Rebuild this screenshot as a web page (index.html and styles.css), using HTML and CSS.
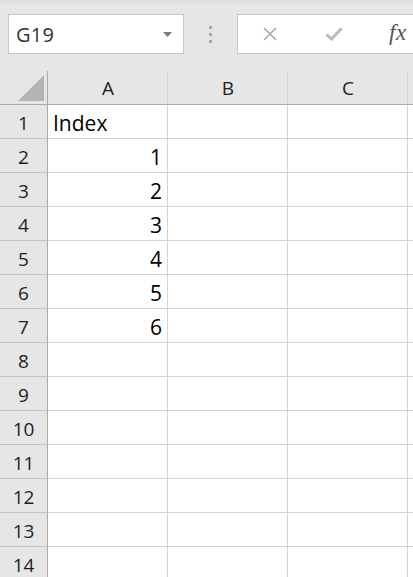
FILE: index.html
```html
<!DOCTYPE html>
<html>
<head>
<meta charset="utf-8">
<link rel="stylesheet" href="styles.css">
</head>
<body>
<div class="toolbar">
  <div class="namebox">
    <span class="name">G19</span>
    <svg class="caret" width="9" height="5" viewBox="0 0 9 5"><path d="M0 0H9L4.5 5Z" fill="#7a7a7a"/></svg>
  </div>
  <div class="dots"><span></span><span></span><span></span></div>
  <div class="formula">
    <svg class="ico-x" width="16" height="16" viewBox="0 0 16 16"><path d="M2 2L14 14M14 2L2 14" stroke="#a9a9a9" stroke-width="1.6" fill="none"/></svg>
    <svg class="ico-check" width="18" height="14" viewBox="0 0 18 14"><path d="M1.5 7.5L6.5 12L16.5 1.5" stroke="#b9b9b9" stroke-width="3" fill="none"/></svg>
    <span class="fx">fx</span>
  </div>
</div>
<div class="sheet">
  <div class="corner"><span class="tri"></span></div>
  <div class="colhead">A</div>
  <div class="colhead">B</div>
  <div class="colhead">C</div>
  <div class="colhead last"></div>

  <div class="rowhead">1</div><div class="cell text">Index</div><div class="cell"></div><div class="cell"></div><div class="cell last"></div>
  <div class="rowhead">2</div><div class="cell num">1</div><div class="cell"></div><div class="cell"></div><div class="cell last"></div>
  <div class="rowhead">3</div><div class="cell num">2</div><div class="cell"></div><div class="cell"></div><div class="cell last"></div>
  <div class="rowhead">4</div><div class="cell num">3</div><div class="cell"></div><div class="cell"></div><div class="cell last"></div>
  <div class="rowhead">5</div><div class="cell num">4</div><div class="cell"></div><div class="cell"></div><div class="cell last"></div>
  <div class="rowhead">6</div><div class="cell num">5</div><div class="cell"></div><div class="cell"></div><div class="cell last"></div>
  <div class="rowhead">7</div><div class="cell num">6</div><div class="cell"></div><div class="cell"></div><div class="cell last"></div>
  <div class="rowhead">8</div><div class="cell"></div><div class="cell"></div><div class="cell"></div><div class="cell last"></div>
  <div class="rowhead">9</div><div class="cell"></div><div class="cell"></div><div class="cell"></div><div class="cell last"></div>
  <div class="rowhead">10</div><div class="cell"></div><div class="cell"></div><div class="cell"></div><div class="cell last"></div>
  <div class="rowhead">11</div><div class="cell"></div><div class="cell"></div><div class="cell"></div><div class="cell last"></div>
  <div class="rowhead">12</div><div class="cell"></div><div class="cell"></div><div class="cell"></div><div class="cell last"></div>
  <div class="rowhead">13</div><div class="cell"></div><div class="cell"></div><div class="cell"></div><div class="cell last"></div>
  <div class="rowhead">14</div><div class="cell"></div><div class="cell"></div><div class="cell"></div><div class="cell last"></div>
</div>
</body>
</html>
```
FILE: styles.css
```css
html, body {
  margin: 0;
  padding: 0;
  background: #ffffff;
  overflow: hidden;
}
body {
  width: 413px;
  height: 577px;
  font-family: "Open Sans", "Liberation Sans", sans-serif;
}
.toolbar {
  height: 71px;
  box-sizing: border-box;
  padding-top: 14px;
  background: linear-gradient(#dcdcdc 0px, #e6e6e6 5px, #e6e6e6 100%);
  display: flex;
  align-items: flex-start;
}
.namebox {
  margin-left: 8px;
  width: 176px;
  height: 40px;
  box-sizing: border-box;
  border: 1px solid #c6c6c6;
  background: #fff;
  display: flex;
  align-items: center;
  padding-left: 7px;
  padding-right: 11px;
}
.name {
  flex: 1;
  font-size: 20px;
  color: #333;
  letter-spacing: 0.2px;
}
.caret { display: block; }
.dots {
  width: 53px;
  height: 40px;
  display: flex;
  flex-direction: column;
  align-items: center;
  justify-content: center;
  gap: 4px;
}
.dots span {
  width: 3px;
  height: 3px;
  background: #a8a8a8;
}
.formula {
  flex: 1;
  height: 40px;
  box-sizing: border-box;
  border: 1px solid #c6c6c6;
  border-right: none;
  background: #fff;
  display: flex;
  align-items: center;
  padding-left: 24px;
}
.ico-x { display: block; }
.ico-check { display: block; margin-left: 47px; }
.fx {
  margin-left: 46px;
  font-family: "Liberation Serif", "DejaVu Serif", serif;
  font-style: italic;
  font-size: 23px;
  color: #555;
  letter-spacing: 0.5px;
  line-height: 1;
  margin-top: -3px;
}
.sheet {
  display: grid;
  grid-template-columns: 48px 120px 120px 120px 1fr;
  grid-auto-rows: 34px;
}
.corner, .colhead, .rowhead {
  background: #e6e6e6;
  color: #1e1e1e;
  font-size: 19px;
  box-sizing: border-box;
  display: flex;
  align-items: center;
  justify-content: center;
}
.corner {
  border-right: 1px solid #ababab;
  border-bottom: 1px solid #ababab;
  position: relative;
}
.tri {
  position: absolute;
  left: 18px;
  top: 4px;
  width: 0;
  height: 0;
  border-left: 26px solid transparent;
  border-bottom: 26px solid #b4b4b4;
}
.colhead {
  border-bottom: 1px solid #ababab;
  background-image: linear-gradient(#d0d0d0, #d0d0d0);
  background-size: 1px 100%;
  background-position: right bottom;
  background-repeat: no-repeat;
  padding-top: 1px;
}
.colhead.last { background-image: none; }
.rowhead {
  border-right: 1px solid #ababab;
  border-bottom: 1px solid #c4c4c4;
  padding-top: 2px;
}
.cell {
  box-sizing: border-box;
  border-right: 1px solid #d4d4d4;
  border-bottom: 1px solid #d4d4d4;
  font-size: 21px;
  color: #000;
  display: flex;
  align-items: center;
  padding: 2px 5px 0 5px;
}
.cell.last { border-right: none; }
.cell.text { justify-content: flex-start; }
.cell.num { justify-content: flex-end; }
```
